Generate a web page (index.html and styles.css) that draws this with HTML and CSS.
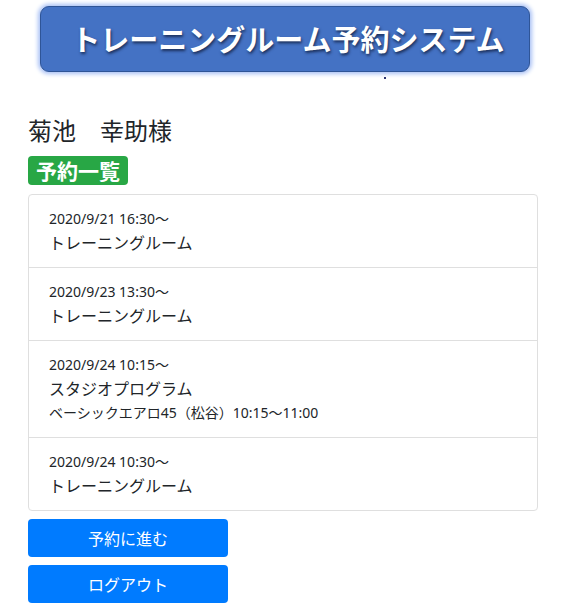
FILE: index.html
```html
<!DOCTYPE html>
<html lang="ja">
<head>
  <meta charset="UTF-8">
  <title>予約一覧</title>
  <link rel="stylesheet" href="styles.css">
</head>
<body>
  <div class="container">
    <div class="logo">
      <div class="logo-box">トレーニングルーム予約システム</div>
      <span class="logo-dot"></span>
    </div>

    <h4 class="user-name">菊池　幸助様</h4>
    <span class="badge">予約一覧</span>

    <ul class="list">
      <li class="list-item">
        <div class="date">2020/9/21 16:30～</div>
        <div>トレーニングルーム</div>
      </li>
      <li class="list-item">
        <div class="date">2020/9/23 13:30～</div>
        <div>トレーニングルーム</div>
      </li>
      <li class="list-item">
        <div class="date">2020/9/24 10:15～</div>
        <div>スタジオプログラム</div>
        <div class="date">ベーシックエアロ45（松谷）10:15～11:00</div>
      </li>
      <li class="list-item">
        <div class="date">2020/9/24 10:30～</div>
        <div>トレーニングルーム</div>
      </li>
    </ul>

    <button class="btn">予約に進む</button>
    <button class="btn">ログアウト</button>
  </div>
</body>
</html>
```

FILE: styles.css
```css
body {
  margin: 0;
  font-family: "Noto Sans", "Noto Sans CJK JP", sans-serif;
  font-size: 16px;
  line-height: 1.5;
  color: #212529;
  background: #fff;
}

.container {
  width: 510px;
  margin: 0 0 0 28px;
  padding: 6px 0 0 0;
}

.logo {
  display: flex;
  flex-direction: column;
  align-items: center;
  height: 80px;
  padding-left: 4px;
}

.logo-box {
  width: 490px;
  height: 66px;
  box-sizing: border-box;
  background: #4472c4;
  border: 1px solid #2f5597;
  border-radius: 9px;
  box-shadow: 0 0 4px 2px #a9c1f5;
  color: #fff;
  font-family: "Noto Sans CJK JP", sans-serif;
  font-weight: bold;
  font-size: 29px;
  line-height: 62px;
  white-space: nowrap;
  text-align: center;
  padding-left: 6px;
  text-shadow: 1px 2px 3px #1b2f5a;
}

.logo-dot {
  width: 2px;
  height: 2px;
  background: #2a3270;
  margin: 5px 0 0 200px;
}

.user-name {
  margin: 30px 0 0 0;
  font-size: 24px;
  font-weight: normal;
  line-height: 29px;
}

.badge {
  display: inline-block;
  margin-top: 11px;
  padding: 0 8px;
  height: 29px;
  line-height: 29px;
  background: #28a745;
  color: #fff;
  font-family: "Noto Sans CJK JP", sans-serif;
  font-weight: bold;
  font-size: 21px;
  border-radius: 4px;
}

.list {
  list-style: none;
  margin: 9px 0 8px 0;
  padding: 0;
  border: 1px solid #dfdfdf;
  border-radius: 4px;
}

.list-item {
  padding: 12px 20px;
  border-top: 1px solid #dfdfdf;
}

.list-item:first-child {
  border-top: none;
}

.date {
  font-size: 14px;
  line-height: 24px;
}

.btn {
  display: block;
  width: 200px;
  height: 38px;
  margin-bottom: 8px;
  border: none;
  border-radius: 4px;
  background: #007bff;
  color: #fff;
  font-family: "Noto Sans", "Noto Sans CJK JP", sans-serif;
  font-size: 16px;
  cursor: pointer;
}
```
